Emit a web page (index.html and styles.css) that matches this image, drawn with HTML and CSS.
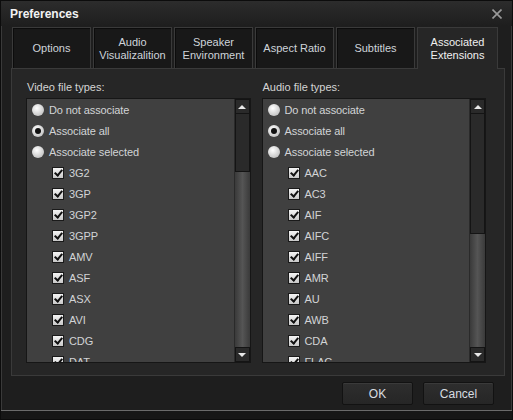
FILE: index.html
```html
<!DOCTYPE html>
<html lang="en">
  <head>
    <meta charset="UTF-8" />
    <title>Preferences</title>
    <link rel="stylesheet" href="styles.css">
  </head>
  <body>
    <div class="window">
      <div class="titlebar">
        <span class="title">Preferences</span>
        <svg class="close" width="10" height="10" viewBox="0 0 10 10">
          <path d="M0.5 0.5 L9.5 9.5 M9.5 0.5 L0.5 9.5" stroke="#9a9a9a" stroke-width="1.6" fill="none" />
        </svg>
      </div>

      <div class="tabs">
        <div class="tab">Options</div>
        <div class="tab">Audio<br>Visualizalition</div>
        <div class="tab">Speaker<br>Environment</div>
        <div class="tab">Aspect Ratio</div>
        <div class="tab">Subtitles</div>
        <div class="tab active">Associated<br>Extensions</div>
      </div>

      <div class="panel">
        <div class="group">
          <div class="group-label">Video file types:</div>
          <div class="listbox">
            <div class="items">
              <div class="row"><span class="radio"></span>Do not associate</div>
              <div class="row"><span class="radio on"></span>Associate all</div>
              <div class="row"><span class="radio"></span>Associate selected</div>
              <div class="row sub"><span class="check"></span>3G2</div>
              <div class="row sub"><span class="check"></span>3GP</div>
              <div class="row sub"><span class="check"></span>3GP2</div>
              <div class="row sub"><span class="check"></span>3GPP</div>
              <div class="row sub"><span class="check"></span>AMV</div>
              <div class="row sub"><span class="check"></span>ASF</div>
              <div class="row sub"><span class="check"></span>ASX</div>
              <div class="row sub"><span class="check"></span>AVI</div>
              <div class="row sub"><span class="check"></span>CDG</div>
              <div class="row sub"><span class="check"></span>DAT</div>
            </div>
            <div class="scrollbar">
              <div class="sb-btn"><span class="arrow up"></span></div>
              <div class="sb-track">
                <div class="sb-thumb" style="height: 58px"></div>
              </div>
              <div class="sb-btn"><span class="arrow down"></span></div>
            </div>
          </div>
        </div>

        <div class="group">
          <div class="group-label">Audio file types:</div>
          <div class="listbox">
            <div class="items">
              <div class="row"><span class="radio"></span>Do not associate</div>
              <div class="row"><span class="radio on"></span>Associate all</div>
              <div class="row"><span class="radio"></span>Associate selected</div>
              <div class="row sub"><span class="check"></span>AAC</div>
              <div class="row sub"><span class="check"></span>AC3</div>
              <div class="row sub"><span class="check"></span>AIF</div>
              <div class="row sub"><span class="check"></span>AIFC</div>
              <div class="row sub"><span class="check"></span>AIFF</div>
              <div class="row sub"><span class="check"></span>AMR</div>
              <div class="row sub"><span class="check"></span>AU</div>
              <div class="row sub"><span class="check"></span>AWB</div>
              <div class="row sub"><span class="check"></span>CDA</div>
              <div class="row sub"><span class="check"></span>FLAC</div>
            </div>
            <div class="scrollbar">
              <div class="sb-btn"><span class="arrow up"></span></div>
              <div class="sb-track">
                <div class="sb-thumb" style="height: 120px"></div>
              </div>
              <div class="sb-btn"><span class="arrow down"></span></div>
            </div>
          </div>
        </div>
      </div>

      <div class="buttons">
        <button class="btn">OK</button>
        <button class="btn">Cancel</button>
      </div>
      <div class="frame-bottom"></div>
    </div>
  </body>
</html>
```

FILE: styles.css
```css
/* Dark dialog */
body {
  margin: 0;
  padding: 0;
  background: #101010;
  font-family: 'Liberation Sans', Arial, sans-serif;
  font-size: 11px;
  color: #d4d4d4;
}

.window {
  box-sizing: border-box;
  width: 513px;
  height: 420px;
  background: #1e1e1e;
  border: 1px solid #0c0c0c;
  box-shadow: inset 0 1px 0 #5a5a5a, inset 1px 0 0 #3a3a3a, inset -1px 0 0 #3a3a3a;
  display: flex;
  flex-direction: column;
  overflow: hidden;
}

.titlebar {
  height: 25px;
  display: flex;
  align-items: center;
  justify-content: space-between;
  padding: 0 10px 0 9px;
  background: linear-gradient(#2c2c2c, #1e1e1e);
}

.title {
  font-weight: bold;
  font-size: 12px;
  color: #f2f2f2;
}

/* Tabs */
.tabs {
  display: flex;
  gap: 2px;
  margin-left: 11px;
  height: 41px;
  margin-top: 1px;
}

.tab {
  box-sizing: border-box;
  width: 79px;
  height: 41px;
  border: 1px solid #3a3a3a;
  border-bottom: none;
  box-shadow: inset 1px 1px 0 #0c0c0c;
  background: #181818;
  color: #cfd4da;
  display: flex;
  align-items: center;
  justify-content: center;
  text-align: center;
  line-height: 13px;
  padding-top: 1px;
}

.tab.active {
  width: 81px;
  background: #262626;
  color: #f0f0f0;
  height: 42px;
  position: relative;
  z-index: 1;
  box-shadow: none;
}

/* Panel */
.panel {
  box-sizing: border-box;
  margin: 0 7px 0 10px;
  height: 308px;
  background: #262626;
  border: 1px solid #3a3a3a;
  display: flex;
  gap: 11px;
  padding: 9px 18px 0 14px;
}

.group {
  flex: 1;
}

.group-label {
  height: 20px;
  line-height: 18px;
  padding-left: 1px;
  color: #d4d4d4;
}

.listbox {
  box-sizing: border-box;
  height: 265px;
  background: #404040;
  border: 1px solid #161616;
  display: flex;
}

.items {
  flex: 1;
  overflow: hidden;
}

.row {
  height: 21px;
  display: flex;
  align-items: center;
  padding-left: 5px;
  color: #d2d4d6;
  white-space: nowrap;
  letter-spacing: -0.1px;
}

.row.sub {
  padding-left: 25px;
}

.radio {
  box-sizing: border-box;
  width: 12px;
  height: 12px;
  border-radius: 50%;
  background: radial-gradient(circle at 40% 35%, #ffffff, #c8c8c8 70%, #9a9a9a);
  margin-right: 5px;
  position: relative;
}

.radio.on::after {
  content: "";
  position: absolute;
  left: 3px;
  top: 3px;
  width: 6px;
  height: 6px;
  border-radius: 50%;
  background: #111;
}

.check {
  box-sizing: border-box;
  width: 12px;
  height: 12px;
  border: 1px solid #1a1a1a;
  background: linear-gradient(#f4f4f4, #c8c8c8);
  margin-right: 5px;
  position: relative;
}

.check::after {
  content: "";
  position: absolute;
  left: 3px;
  top: 0px;
  width: 3px;
  height: 6px;
  border: solid #111;
  border-width: 0 2px 2px 0;
  transform: rotate(40deg);
}

/* Scrollbar */
.scrollbar {
  width: 15px;
  display: flex;
  flex-direction: column;
  border-left: 1px solid #2a2a2a;
}

.sb-btn {
  box-sizing: border-box;
  height: 15px;
  background: #2a2a2a;
  border: 1px solid #141414;
  display: flex;
  align-items: center;
  justify-content: center;
}

.arrow {
  width: 0;
  height: 0;
  border-left: 4px solid transparent;
  border-right: 4px solid transparent;
}

.arrow.up {
  border-bottom: 4px solid #e8e8e8;
}

.arrow.down {
  border-top: 4px solid #e8e8e8;
}

.sb-track {
  flex: 1;
  background: linear-gradient(90deg, #3a3a3a, #555555 50%, #3a3a3a);
}

.sb-thumb {
  box-sizing: border-box;
  background: #2a2a2a;
  border: 1px solid #141414;
  border-top: none;
}

/* Buttons */
.buttons {
  display: flex;
  justify-content: flex-end;
  gap: 10px;
  padding: 6px 18px 0 0;
  height: 28px;
}

.btn {
  width: 71px;
  height: 23px;
  background: linear-gradient(#2e2e2e, #262626);
  border: 1px solid #121212;
  border-radius: 2px;
  box-shadow: inset 0 1px 0 #3a3a3a;
  color: #d8dce0;
  font-family: 'Liberation Sans', Arial, sans-serif;
  font-size: 12px;
  padding: 0;
}

.frame-bottom {
  flex: 1;
  border-top: 1px solid #6a6a6a;
  background: #161616;
}
```
